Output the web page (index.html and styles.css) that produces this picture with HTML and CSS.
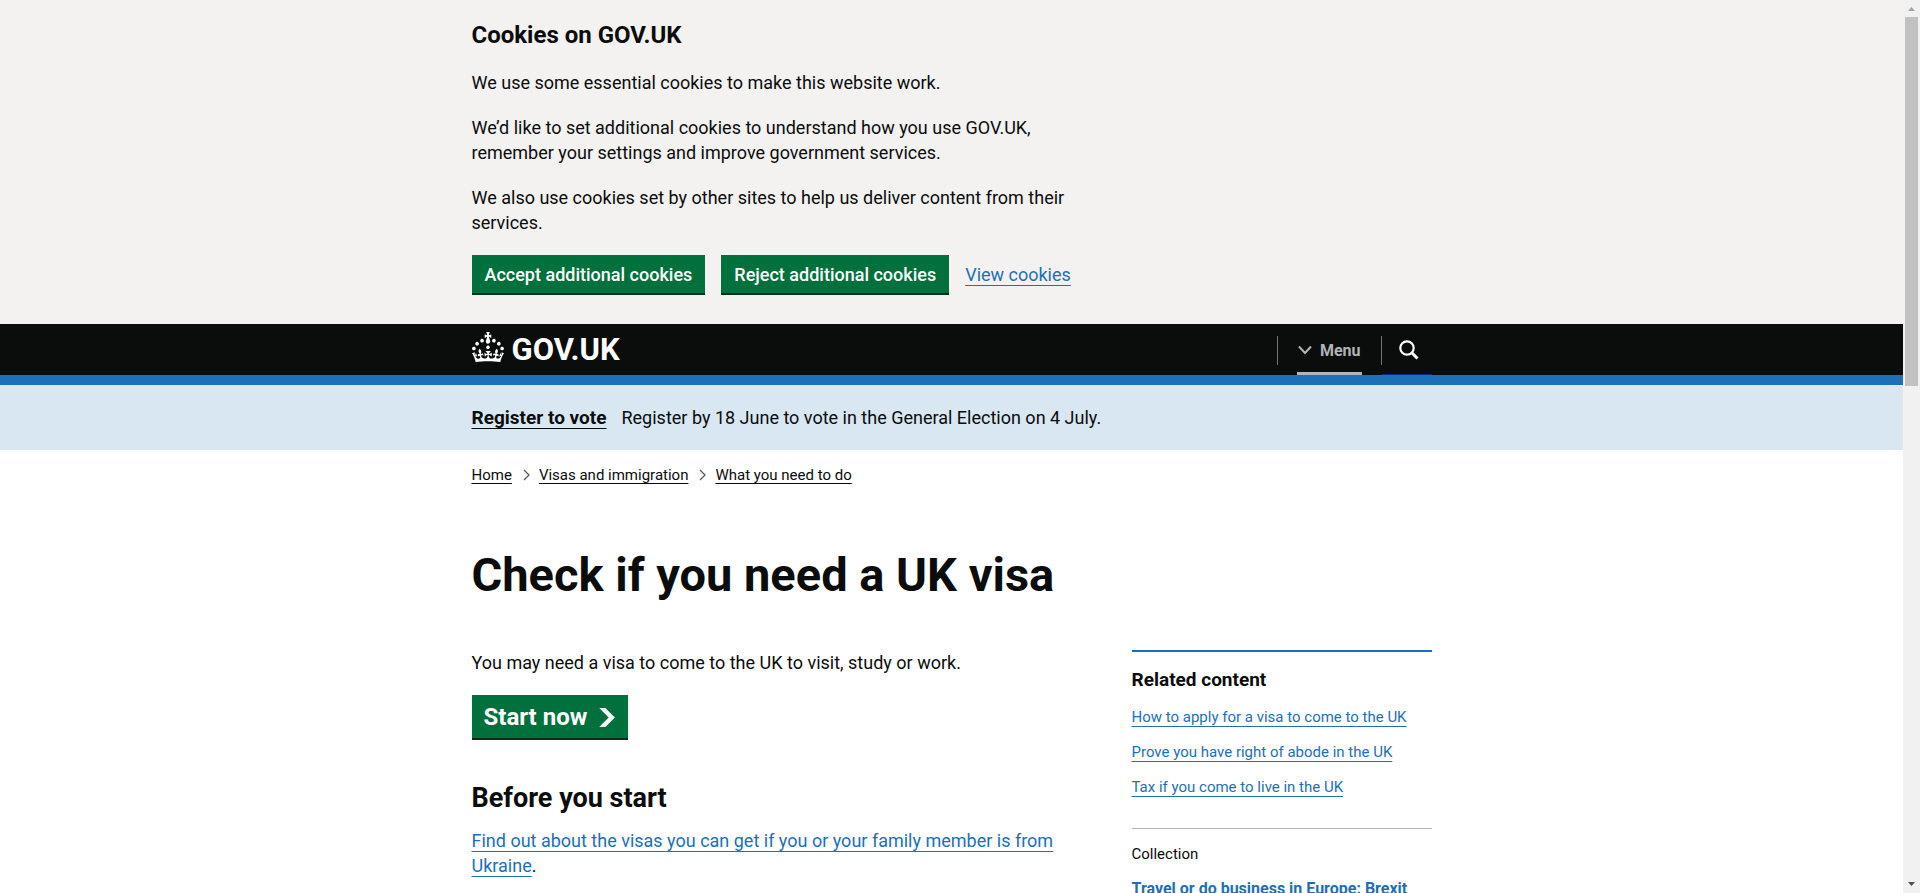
FILE: index.html
```html
<!DOCTYPE html>
<html lang="en">
<head>
<meta charset="utf-8">
<title>Check if you need a UK visa - GOV.UK</title>
<link rel="stylesheet" href="styles.css">
</head>
<body>
<div class="viewport">
  <div class="page">
    <section class="cookie-banner" aria-label="Cookies on GOV.UK">
      <div class="container">
        <div class="column-main">
          <h2 class="cookie-banner__title">Cookies on GOV.UK</h2>
          <p class="text">We use some essential cookies to make this website work.</p>
          <p class="text">We’d like to set additional cookies to understand how you use GOV.UK, remember your settings and improve government services.</p>
          <p class="text">We also use cookies set by other sites to help us deliver content from their services.</p>
          <div class="cookie-banner__actions">
            <button class="button" type="button">Accept additional cookies</button>
            <button class="button" type="button">Reject additional cookies</button>
            <a class="link" href="#">View cookies</a>
          </div>
        </div>
      </div>
    </section>

    <header class="header">
      <div class="container header__row">
        <a class="logo" href="#">
          <svg class="logo__crown" viewBox="0 0 32 30" width="32" height="30" fill="currentColor" aria-hidden="true"><path d="M22.6 10.4c-1 .4-2-.1-2.4-1-.4-.9.1-2 1-2.4.9-.4 2 .1 2.4 1s-.1 2-1 2.4m-5.9 6.7c-.9.4-2-.1-2.4-1-.4-.9.1-2 1-2.4.9-.4 2 .1 2.4 1s-.1 2-1 2.4m10.8-3.7c-1 .4-2-.1-2.4-1-.4-.9.1-2 1-2.4.9-.4 2 .1 2.4 1s0 2-1 2.4m3.3 4.8c-1 .4-2-.1-2.4-1-.4-.9.1-2 1-2.4.9-.4 2 .1 2.4 1s-.1 2-1 2.4M17 4.7l2.3 1.2V2.5l-2.3.7-.2-.2.9-3h-3.4l.9 3-.2.2c-.1.1-2.3-.7-2.3-.7v3.4L15 4.7c.1.1.1.2.2.2l-1.3 4c-.1.2-.1.4-.1.6 0 1.1.8 2 1.9 2.2h.7c1-.2 1.9-1.1 1.9-2.1 0-.2 0-.4-.1-.6l-1.3-4c-.1-.2 0-.2.1-.3m-7.6 5.7c.9.4 2-.1 2.4-1 .4-.9-.1-2-1-2.4-.9-.4-2 .1-2.4 1s0 2 1 2.4m-5 3c.9.4 2-.1 2.4-1 .4-.9-.1-2-1-2.4-.9-.4-2 .1-2.4 1s.1 2 1 2.4m-3.2 4.8c.9.4 2-.1 2.4-1 .4-.9-.1-2-1-2.4-.9-.4-2 .1-2.4 1s0 2 1 2.4m14.8 11c4.4 0 8.6.3 12.3.8 1.1-4.5 2.4-7 3.7-8.8l-2.5-.9c.2 1.3.3 1.9 0 2.7-.4-.4-.8-1.1-1.1-2.3l-1.2 4c.7-.5 1.3-.8 2-.9-1.1 2.5-2.6 3.1-3.5 3-1.1-.2-1.7-1.2-1.5-2.1.3-1.2 1.5-1.5 2.1-.1 1.1-2.3-.8-3-2-2.3 1.9-1.9 2.1-3.5.6-5.6-2.1 1.6-2.1 3.2-1.2 5.5-1.2-1.4-3.2-.6-2.5 1.6.9-1.4 2.1-.5 1.9.8-.2 1.1-1.7 2.1-3.5 1.9-2.7-.2-2.9-2.1-2.9-3.6.7-.1 1.9.5 2.9 1.9l.4-4.3c-1.1 1.1-2.1 1.4-3.2 1.4.4-1.2 2.1-3 2.1-3h-5.4s1.7 1.9 2.1 3c-1.1 0-2.1-.2-3.2-1.4l.4 4.3c1-1.4 2.2-2 2.9-1.9-.1 1.5-.2 3.4-2.9 3.6-1.9.2-3.4-.8-3.5-1.9-.2-1.3 1-2.2 1.9-.8.7-2.3-1.2-3-2.5-1.6.9-2.2.9-3.9-1.2-5.5-1.5 2-1.3 3.7.6 5.6-1.2-.7-3.1 0-2 2.3.6-1.4 1.8-1.1 2.1.1.2.9-.3 1.9-1.5 2.1-.9.2-2.4-.5-3.5-3 .6 0 1.2.3 2 .9l-1.2-4c-.3 1.1-.7 1.9-1.1 2.3-.3-.8-.2-1.4 0-2.7l-2.9.9C1.3 23 2.6 25.5 3.7 30c3.7-.5 7.9-.8 12.3-.8"/></svg>
          <span class="logo__text">GOV.UK</span>
        </a>
        <nav class="header__nav" aria-label="Navigation menu">
          <div class="header__item header__item--menu">
            <button class="menu-toggle" type="button">
              <svg width="14" height="10" viewBox="0 0 14 10" fill="none" stroke="currentColor" stroke-width="2" aria-hidden="true"><path d="M1 1.500 7 8l6-6.500"/></svg>
              Menu
            </button>
          </div>
          <div class="header__item header__item--search">
            <button class="search-toggle" type="button" aria-label="Search GOV.UK">
              <svg width="20" height="20" viewBox="0 0 20 20" fill="none" stroke="currentColor" aria-hidden="true"><circle cx="8" cy="8" r="6.700" stroke-width="2.200"/><path d="m12.500 12.500 6 6" stroke-width="3"/></svg>
            </button>
          </div>
        </nav>
      </div>
    </header>

    <aside class="notice">
      <div class="container notice__row">
        <a class="notice__link" href="#">Register to vote</a>
        <span>Register by 18 June to vote in the General Election on 4 July.</span>
      </div>
    </aside>

    <div class="container">
      <nav aria-label="Breadcrumb">
        <ol class="breadcrumbs">
          <li class="breadcrumbs__item"><a class="breadcrumbs__link" href="#">Home</a></li>
          <li class="breadcrumbs__item"><svg class="breadcrumbs__chevron" width="7" height="12" viewBox="0 0 7 12" fill="none" stroke="currentColor" stroke-width="1.300" aria-hidden="true"><path d="m1 1 5 5-5 5"/></svg><a class="breadcrumbs__link" href="#">Visas and immigration</a></li>
          <li class="breadcrumbs__item"><svg class="breadcrumbs__chevron" width="7" height="12" viewBox="0 0 7 12" fill="none" stroke="currentColor" stroke-width="1.300" aria-hidden="true"><path d="m1 1 5 5-5 5"/></svg><a class="breadcrumbs__link" href="#">What you need to do</a></li>
        </ol>
      </nav>

      <h1 class="title">Check if you need a UK visa</h1>

      <div class="columns">
        <main class="column-main">
          <p class="text">You may need a visa to come to the UK to visit, study or work.</p>
          <a class="button button--start" href="#">
            Start now
            <svg width="16" height="19" viewBox="0 0 33 40" fill="currentColor" aria-hidden="true"><path d="M0 0h13l20 20-20 20H0l20-20z"/></svg>
          </a>
          <h2 class="heading">Before you start</h2>
          <p class="text"><a class="link" href="#">Find out about the visas you can get if you or your family member is from Ukraine</a>.</p>
        </main>
        <aside class="related">
          <h2 class="related__title">Related content</h2>
          <ul class="related__list">
            <li><a class="link" href="#">How to apply for a visa to come to the UK</a></li>
            <li><a class="link" href="#">Prove you have right of abode in the UK</a></li>
            <li><a class="link" href="#">Tax if you come to live in the UK</a></li>
          </ul>
          <div class="related__collection">
            <h3 class="related__label">Collection</h3>
            <a class="link link--bold" href="#">Travel or do business in Europe: Brexit</a>
          </div>
        </aside>
      </div>
    </div>
  </div>

  <div class="scrollbar" aria-hidden="true">
    <svg class="scrollbar__arrow scrollbar__arrow--up" width="17" height="17" viewBox="0 0 17 17"><path d="M5 11h7L8.500 7z"/></svg>
    <div class="scrollbar__thumb"></div>
    <svg class="scrollbar__arrow" width="17" height="17" viewBox="0 0 17 17"><path d="M5 6h7l-3.500 4z"/></svg>
  </div>
</div>
</body>
</html>
```
FILE: styles.css
```css
* {
  box-sizing: border-box;
}

body {
  margin: 0;
  background: #fff;
  color: #0b0c0c;
  font-family: Roboto, "Liberation Sans", Arial, sans-serif;
  font-size: 18px;
  line-height: 25px;
}

.viewport {
  display: flex;
  height: 100vh;
}

.page {
  flex: 1;
  overflow: hidden;
}

.container {
  max-width: 960px;
  margin: 0 auto;
}

.column-main {
  flex: 1;
  max-width: 630px;
}

.text {
  margin: 0 0 20px;
}

.link {
  color: #1d70b8;
  text-decoration: underline;
  text-decoration-thickness: 1px;
  text-underline-offset: 4px;
  text-decoration-skip-ink: none;
}

.link--bold {
  font-size: 16px;
  font-weight: 700;
}

.button {
  padding: 8px 13px 7px;
  border: 0;
  border-radius: 0;
  background: #00703c;
  box-shadow: 0 2px 0 #002d18;
  color: #fff;
  font: inherit;
  font-weight: 500;
  line-height: 23px;
  text-align: center;
  text-decoration: none;
}

.button--start {
  display: inline-flex;
  align-items: center;
  gap: 12px;
  padding: 8px 13px 7px 12px;
  font-size: 24px;
  font-weight: 700;
  line-height: 28px;
}

/* Cookie banner */

.cookie-banner {
  padding: 20px 0 31px;
  background: #f3f2f1;
}

.cookie-banner__title {
  margin: 0 0 20px;
  font-size: 24px;
  font-weight: 700;
  line-height: 30px;
}

.cookie-banner__actions {
  display: flex;
  align-items: center;
  gap: 16px;
}

/* Header */

.header {
  border-bottom: 10px solid #1d70b8;
  background: #0b0c0c;
  color: #fff;
}

.header__row {
  display: flex;
  justify-content: space-between;
  height: 51px;
}

.logo {
  display: flex;
  align-items: center;
  gap: 8px;
  color: #fff;
  text-decoration: none;
}

.logo__crown {
  margin-bottom: 5px;
}

.logo__text {
  font-size: 31px;
  font-weight: 700;
  line-height: 31px;
}

.header__nav,
.header__item {
  display: flex;
}

.header__item::before {
  content: "";
  width: 1px;
  height: 29px;
  margin-top: 12px;
  background: #6f777b;
}

.header__item--menu {
  padding-right: 19px;
}

.menu-toggle,
.search-toggle {
  display: flex;
  align-items: center;
  border: 0;
  background: none;
  color: #b1b4b6;
  font: inherit;
}

.menu-toggle {
  gap: 8px;
  margin-left: 19px;
  padding: 4px 1px 0;
  border-bottom: 3px solid #b1b4b6;
  font-size: 16px;
  font-weight: 700;
}

.search-toggle {
  padding: 2px 13px 0 17px;
  border-bottom: 1px solid #003078;
  color: #fff;
}

/* Election notice */

.notice {
  padding: 20px 0;
  background: #d9e7f2;
}

.notice__row {
  display: flex;
  align-items: baseline;
  gap: 15px;
}

.notice__link {
  color: inherit;
  font-size: 19px;
  font-weight: 700;
  text-decoration-thickness: 1px;
  text-underline-offset: 4px;
  text-decoration-skip-ink: none;
}

/* Breadcrumbs */

.breadcrumbs {
  display: flex;
  gap: 11px;
  margin: 0;
  padding: 15px 0;
  font-size: 15px;
  line-height: 20px;
  list-style: none;
}

.breadcrumbs__item {
  display: flex;
  align-items: center;
  gap: 9px;
}

.breadcrumbs__chevron {
  color: #505a5f;
}

.breadcrumbs__link {
  color: inherit;
  text-decoration-thickness: 1px;
  text-underline-offset: 3px;
  text-decoration-skip-ink: none;
}

/* Content */

.title {
  margin: 50px 0;
  font-size: 47px;
  font-weight: 700;
  line-height: 50px;
}

.columns {
  display: flex;
  justify-content: space-between;
}

.heading {
  margin: 43px 0 12px;
  font-size: 27px;
  font-weight: 700;
  line-height: 35px;
}

.related {
  width: 300px;
  border-top: 2px solid #1d70b8;
  font-size: 15px;
  line-height: 20px;
}

.related__title {
  margin: 15px 0;
  font-size: 19px;
  font-weight: 700;
  line-height: 25px;
}

.related__list {
  display: grid;
  gap: 15px;
  margin: 0 0 31px;
  padding: 0;
  list-style: none;
}

.related__collection {
  padding-top: 15px;
  border-top: 1px solid #b1b4b6;
}

.related__label {
  margin: 0 0 15px;
  font-size: 15px;
  font-weight: 400;
}

/* Scrollbar */

.scrollbar {
  display: flex;
  flex-direction: column;
  width: 17px;
  background: #f1f1f1;
}

.scrollbar__thumb {
  width: 13px;
  height: 369px;
  margin: 0 auto auto;
  background: #c1c1c1;
}

.scrollbar__arrow {
  fill: #505050;
}

.scrollbar__arrow--up {
  fill: #a3a3a3;
}
```
